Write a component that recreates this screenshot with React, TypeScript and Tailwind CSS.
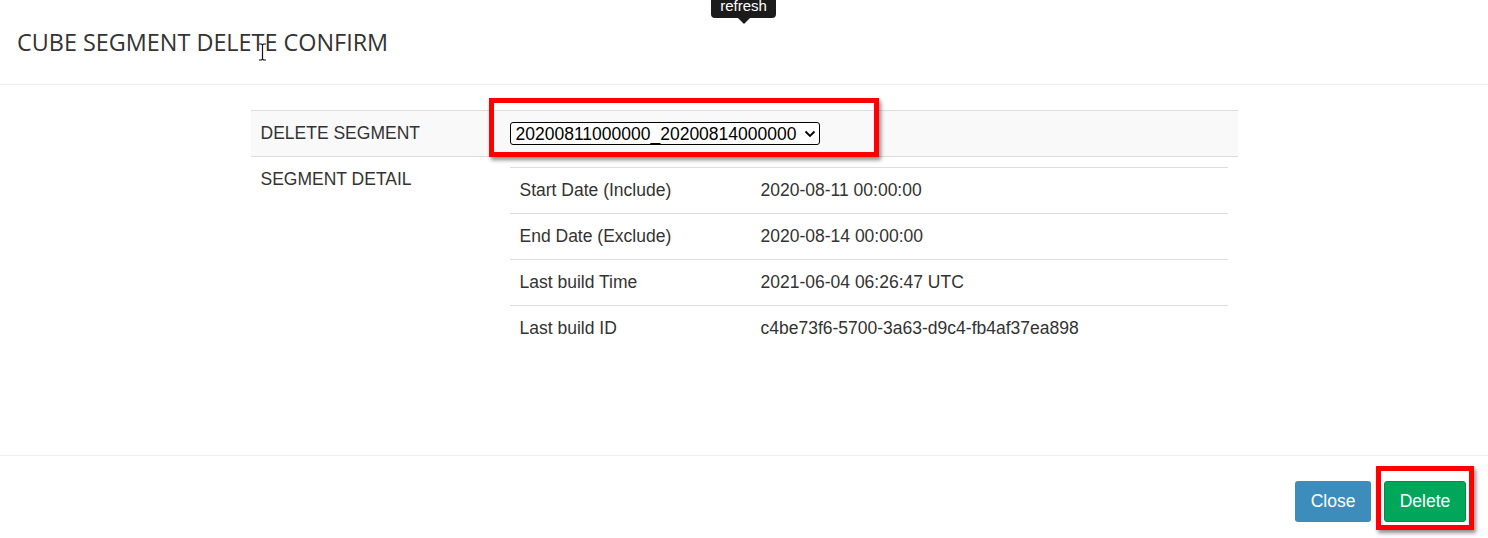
import React from "react";

const rows = [
  ["Start Date (Include)", "2020-08-11 00:00:00"],
  ["End Date (Exclude)", "2020-08-14 00:00:00"],
  ["Last build Time", "2021-06-04 06:26:47 UTC"],
  ["Last build ID", "c4be73f6-5700-3a63-d9c4-fb4af37ea898"],
];

export default function App() {
  return (
    <div className="relative w-[1488px] h-[538px] overflow-hidden bg-white text-[#333] font-['Liberation_Sans',Arial,sans-serif] text-[17.5px] leading-[25px]">
      {/* tooltip */}
      <div className="absolute left-[711px] top-0 flex flex-col items-center">
        <div className="h-[18px] w-[65px] rounded-b-[4px] bg-[#1b1b1b] text-white text-[15px] leading-[12px] text-center">
          refresh
        </div>
        <div className="w-0 h-0 border-l-[6px] border-r-[6px] border-t-[6px] border-l-transparent border-r-transparent border-t-[#1b1b1b]" />
      </div>

      {/* header */}
      <div className="h-[85px] border-b border-[#ececec] flex items-center pl-[17px]">
        <h4 className="font-['Open_Sans',sans-serif] text-[23.4px] leading-[30px] text-[#333]">
          CUBE SEGMENT DELETE CONFIRM
        </h4>
      </div>
      {/* I-beam cursor */}
      <svg className="absolute left-[258px] top-[43px]" width="9" height="18" viewBox="0 0 9 18">
        <path d="M1 1h2.5l1 1 1-1H8M4.5 2v14M1 17h2.5l1-1 1 1H8" stroke="#111" strokeWidth="1.2" fill="none" />
      </svg>

      {/* body */}
      <div className="h-[370px] pt-[25px]">
        <div className="w-[987px] mx-auto">
          <div className="flex h-[46px] border-t border-[#ddd] bg-[#f9f9f9]">
            <div className="w-[249px] pl-[10px] flex items-center">DELETE SEGMENT</div>
            <div className="flex-1 pl-[10px] flex items-center">
              <div className="relative">
                <div className="w-[310px] h-[23px] border-[1.5px] border-black rounded-[3px] flex items-center justify-between pl-[5px] pr-[3px] bg-white text-black">
                  <span className="text-[17.5px] leading-[20px]">20200811000000_20200814000000</span>
                  <svg width="12" height="8" viewBox="0 0 12 8">
                    <path d="M1.5 1.5l4.5 4.5 4.5-4.5" stroke="#000" strokeWidth="1.8" fill="none" />
                  </svg>
                </div>
                <div className="absolute -left-[21px] -top-[24px] w-[390px] h-[59px] border-[5px] border-[#ff0000] shadow-[2px_3px_4px_rgba(0,0,0,0.45)]" />
              </div>
            </div>
          </div>
          <div className="flex border-t border-[#ddd]">
            <div className="w-[249px] pl-[10px] pt-[10px]">SEGMENT DETAIL</div>
            <div className="flex-1 px-[10px] pt-[10px]">
              {rows.map(([k, v]) => (
                <div key={k} className="flex h-[46px] border-t border-[#ddd] items-center">
                  <div className="w-[251px] pl-[10px]">{k}</div>
                  <div>{v}</div>
                </div>
              ))}
            </div>
          </div>
        </div>
      </div>

      {/* footer */}
      <div className="border-t border-[#f0f0f0] pt-[25px] pr-[22px] flex justify-end gap-[13px]">
        <button className="w-[76px] h-[41px] rounded-[3px] bg-[#3c8dbc] text-white text-[17.5px]">Close</button>
        <div className="relative">
          <button className="w-[82px] h-[41px] rounded-[3px] bg-[#00a65a] border border-[#008d4c] text-white text-[17.5px]">Delete</button>
          <div className="absolute -left-[8px] -top-[15px] w-[98px] h-[64px] border-[5px] border-[#ff0000] shadow-[2px_3px_4px_rgba(0,0,0,0.45)]" />
        </div>
      </div>
    </div>
  );
}
